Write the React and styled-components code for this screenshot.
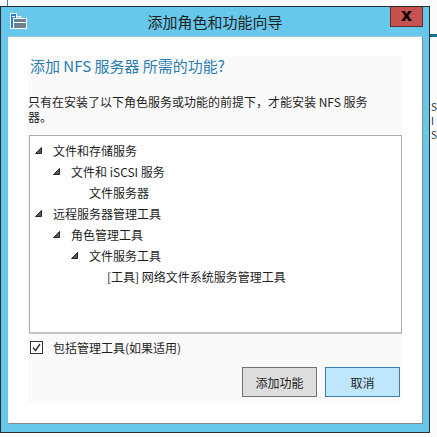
import React from "react";
import styled, { createGlobalStyle } from "styled-components";

const GlobalStyle = createGlobalStyle`
  html, body { margin: 0; padding: 0; }
  body {
    background: #fcfcfc;
    font-family: "Noto Sans CJK SC", "Noto Sans", sans-serif;
    color: #1e1e1e;
  }
`;

const Desktop = styled.div`
  position: relative;
  width: 437px;
  height: 437px;
  overflow: hidden;
  background: #fcfcfc;
`;

const BgCorner = styled.div`
  position: absolute;
  left: -3px;
  top: -3px;
  width: 9px;
  height: 8px;
  background: #fff;
  border: 1px solid #3d7ebf;
`;

const BgStripe = styled.div`
  position: absolute;
  left: 428px;
  top: 34px;
  width: 12px;
  height: 3px;
  background: #17728f;
`;

const BgText = styled.div`
  position: absolute;
  left: 431px;
  top: 100px;
  font-size: 10px;
  line-height: 14px;
  color: #333;
  white-space: nowrap;
`;

const Window = styled.div`
  position: absolute;
  left: 0;
  top: 6px;
  width: 430px;
  height: 427px;
  box-sizing: border-box;
  border: 1px solid #2b2b2b;
  background: #67c8eb;
  display: flex;
  flex-direction: column;
  z-index: 1;
`;

const TitleBar = styled.div`
  height: 29px;
  flex: none;
  display: grid;
  grid-template-columns: 1fr auto 1fr;
  align-items: center;
`;

const TitleIcon = styled.svg`
  margin-left: 9px;
  display: block;
`;

const TitleText = styled.div`
  font-size: 15px;
  line-height: 20px;
  color: #1e1e1e;
`;

const CloseButton = styled.div`
  justify-self: end;
  align-self: start;
  margin-right: 6px;
  width: 33px;
  height: 20px;
  box-sizing: border-box;
  background: #c75050;
  border: 1px solid #5c2e2e;
  border-top: none;
  display: flex;
  align-items: center;
  justify-content: center;
  font-family: "DejaVu Sans", sans-serif;
  font-weight: bold;
  font-size: 17px;
  color: #000;
  line-height: 1;
  padding-bottom: 3px;
`;

const Client = styled.div`
  flex: 1;
  margin: 0 7px 9px 7px;
  background: #fff;
  border-top: 1px solid #9fc9dc;
  box-shadow: 1px 1px 0 #8a8a8a;
  padding: 19px 20px 20px;
  display: flex;
  flex-direction: column;
`;

const Panel = styled.div`
  flex: 1;
  background: #fafafa;
  display: flex;
  flex-direction: column;
`;

const Heading = styled.h1`
  margin: 0 0 0 2px;
  font-size: 15px;
  font-weight: normal;
  line-height: 20px;
  color: #2a7db3;
`;

const Para = styled.p`
  margin: 18px 0 0;
  width: 352px;
  font-size: 12px;
  line-height: 15px;
  color: #1e1e1e;
`;

const TreeBox = styled.div`
  margin: 11px 0 0 1px;
  height: 199px;
  box-sizing: border-box;
  border: 1px solid #acacac;
  border-bottom: 2px solid #c4c4c4;
  background: #fff;
  padding-top: 4px;
`;

const TreeRow = styled.div`
  height: 21px;
  display: flex;
  align-items: center;
  padding-left: ${(p) => 5 + p.$level * 18}px;
  font-size: 12px;
  color: #1e1e1e;
  white-space: nowrap;
`;

const Expander = styled.span`
  width: 18px;
  flex: none;
  display: flex;
  align-items: center;
`;

const CheckRow = styled.label`
  margin-top: 7px;
  margin-left: 2px;
  display: flex;
  align-items: center;
  gap: 10px;
  font-size: 12px;
  line-height: 13px;
  color: #1e1e1e;
`;

const CheckBox = styled.span`
  width: 13px;
  height: 13px;
  box-sizing: border-box;
  border: 1px solid #333;
  background: #fff;
  display: flex;
  align-items: center;
  justify-content: center;
`;

const ButtonRow = styled.div`
  margin-top: 13px;
  padding-right: 2px;
  display: flex;
  justify-content: flex-end;
  gap: 8px;
`;

const Button = styled.button`
  width: 75px;
  height: 30px;
  box-sizing: border-box;
  border: 1px solid ${(p) => (p.$primary ? "#3c7fb1" : "#707070")};
  background: ${(p) => (p.$primary ? "#bee6fd" : "#dddddd")};
  font-family: "Noto Sans CJK SC", sans-serif;
  font-size: 12px;
  color: #1e1e1e;
  padding: 0;
`;

const Triangle = () => (
  <svg width="7" height="7" viewBox="0 0 7 7">
    <polygon points="6.5,0.5 6.5,6.5 0.5,6.5" fill="#595959" stroke="#262626" strokeWidth="1" strokeLinejoin="miter" />
  </svg>
);

const tree = [
  { level: 0, text: "文件和存储服务", open: true },
  { level: 1, text: "文件和 iSCSI 服务", open: true },
  { level: 2, text: "文件服务器" },
  { level: 0, text: "远程服务器管理工具", open: true },
  { level: 1, text: "角色管理工具", open: true },
  { level: 2, text: "文件服务工具", open: true },
  { level: 3, text: "[工具] 网络文件系统服务管理工具" },
];

export default function App() {
  return (
    <>
      <GlobalStyle />
      <Desktop>
        <BgCorner />
        <BgStripe />
        <BgText>
          S<br />I<br />S
        </BgText>
        <Window>
          <TitleBar>
            <TitleIcon width="17" height="17" viewBox="0 0 17 17">
              <rect x="0.5" y="0.5" width="6" height="15" fill="#2a7fd4" stroke="#fff" />
              <rect x="2" y="3" width="3" height="1" fill="#fff" />
              <rect x="6.5" y="3.5" width="4" height="2" fill="none" stroke="#fff" />
              <rect x="3.5" y="5.5" width="13" height="10" fill="#6f7f92" stroke="#fff" />
              <rect x="4" y="9" width="12" height="1" fill="#fff" />
            </TitleIcon>
            <TitleText>添加角色和功能向导</TitleText>
            <CloseButton>x</CloseButton>
          </TitleBar>
          <Client>
            <Panel>
              <Heading>添加 NFS 服务器 所需的功能?</Heading>
              <Para>只有在安装了以下角色服务或功能的前提下，才能安装 NFS 服务器。</Para>
              <TreeBox>
                {tree.map((n, i) => (
                  <TreeRow key={i} $level={n.level}>
                    <Expander>{n.open ? <Triangle /> : null}</Expander>
                    {n.text}
                  </TreeRow>
                ))}
              </TreeBox>
              <CheckRow>
                <CheckBox>
                  <svg width="11" height="11" viewBox="0 0 11 11">
                    <polyline points="2,5.5 4.5,8.5 9,2" fill="none" stroke="#333" strokeWidth="1.4" />
                  </svg>
                </CheckBox>
                包括管理工具(如果适用)
              </CheckRow>
              <ButtonRow>
                <Button>添加功能</Button>
                <Button $primary>取消</Button>
              </ButtonRow>
            </Panel>
          </Client>
        </Window>
      </Desktop>
    </>
  );
}
